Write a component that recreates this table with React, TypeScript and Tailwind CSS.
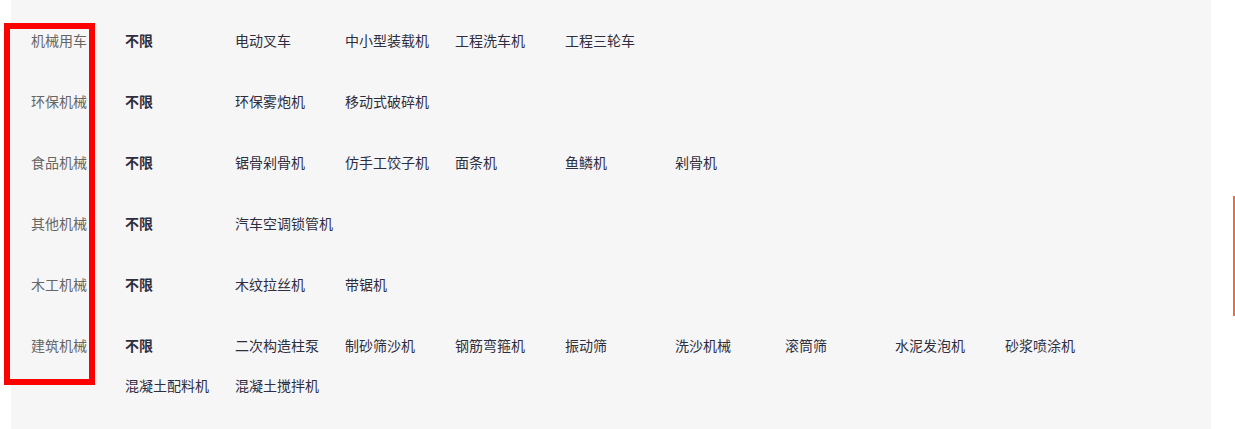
const rows: { label: string; items: string[] }[] = [
  { label: '机械用车', items: ['电动叉车', '中小型装载机', '工程洗车机', '工程三轮车'] },
  { label: '环保机械', items: ['环保雾炮机', '移动式破碎机'] },
  { label: '食品机械', items: ['锯骨剁骨机', '仿手工饺子机', '面条机', '鱼鳞机', '剁骨机'] },
  { label: '其他机械', items: ['汽车空调锁管机'] },
  { label: '木工机械', items: ['木纹拉丝机', '带锯机'] },
  {
    label: '建筑机械',
    items: [
      '二次构造柱泵',
      '制砂筛沙机',
      '钢筋弯箍机',
      '振动筛',
      '洗沙机械',
      '滚筒筛',
      '水泥发泡机',
      '砂浆喷涂机',
      '混凝土配料机',
      '混凝土搅拌机',
    ],
  },
]

export default function App() {
  return (
    <div
      className="relative flex w-[1235px] h-[429px] overflow-hidden bg-white text-[14px]"
      style={{ fontFamily: '"Noto Sans CJK SC", "Microsoft YaHei", sans-serif' }}
    >
      <div className="ml-[11px] w-[1200px] shrink-0 bg-[#f6f6f6] pt-[20px]">
        {rows.map((row) => (
          <div key={row.label} className="flex mb-[21px]">
            <div className="w-[76px] shrink-0 text-right leading-[40px] text-[#666]">{row.label}</div>
            <div className="ml-[38px] flex w-[1090px] flex-wrap">
              <span className="w-[110px] leading-[40px] font-bold text-[#2e2e3e]">不限</span>
              {row.items.map((item) => (
                <span key={item} className="w-[110px] leading-[40px] text-[#2e2e3e] whitespace-nowrap">
                  {item}
                </span>
              ))}
            </div>
          </div>
        ))}
      </div>

      {/* side marker */}
      <div className="absolute left-[1233px] top-[196px] h-[120px] w-[2px] bg-[#f26b3a]" />

      {/* annotation box */}
      <div className="absolute left-[4px] top-[23px] h-[362px] w-[91px] border-[6px] border-[#ff0000]" />
    </div>
  )
}
